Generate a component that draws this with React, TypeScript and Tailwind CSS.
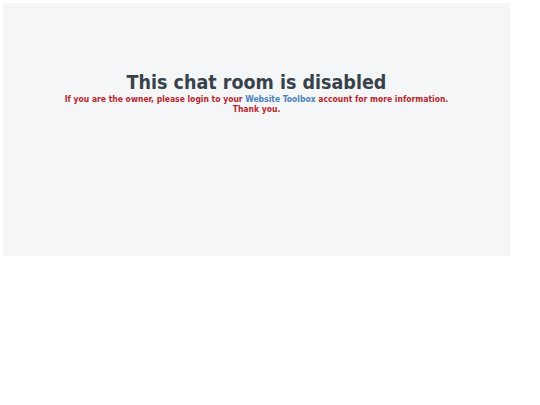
export default function App() {
  return (
    <div className="h-[405px] w-[540px] bg-white p-[3px] font-['DejaVu_Sans_Condensed','DejaVu_Sans',Verdana,sans-serif]">
      <div className="flex h-[253px] w-[507px] flex-col items-center bg-[#f4f6f8] pt-[68px] text-center">
        <h1 className="text-[19.5px] font-bold leading-[24px] text-[#37424b]">This chat room is disabled</h1>
        <p className="text-[8.5px] font-bold leading-[9.5px] text-[#b8262e]">
          If you are the owner, please login to your{' '}
          <span className="text-[#4b82b8]">Website Toolbox</span> account for more information.
          <br />
          Thank you.
        </p>
      </div>
    </div>
  );
}
